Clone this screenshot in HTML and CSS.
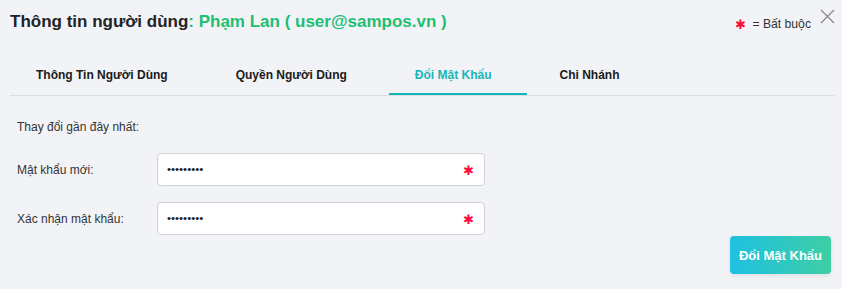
FILE: index.html
```html
<!DOCTYPE html>
<html lang="vi">
<head>
<meta charset="utf-8">
<title>Thông tin người dùng</title>
<link rel="stylesheet" href="styles.css">
</head>
<body>
<div class="modal">
  <div class="header">
    <h1 class="title">Thông tin người dùng<span class="user">: Phạm Lan ( user@sampos.vn )</span></h1>
    <div class="legend">
      <span class="req">&#x2731;</span>
      <span class="legend-text">= Bất buộc</span>
      <svg class="close" width="15" height="15" viewBox="0 0 15 15" aria-hidden="true">
        <path d="M1 1 L14 14 M14 1 L1 14" stroke="#8a8c92" stroke-width="1.4" fill="none"/>
      </svg>
    </div>
  </div>
  <div class="tabs">
    <div class="tab">Thông Tin Người Dùng</div>
    <div class="tab">Quyền Người Dùng</div>
    <div class="tab active">Đổi Mật Khẩu</div>
    <div class="tab">Chi Nhánh</div>
  </div>
  <div class="form">
    <div class="row info">
      <div class="label">Thay đổi gần đây nhất:</div>
    </div>
    <div class="row">
      <div class="label">Mật khẩu mới:</div>
      <div class="field"><span class="dots">•••••••••</span><span class="req field-req">&#x2731;</span></div>
    </div>
    <div class="row">
      <div class="label">Xác nhận mật khẩu:</div>
      <div class="field"><span class="dots">•••••••••</span><span class="req field-req">&#x2731;</span></div>
    </div>
    <div class="actions">
      <button class="btn">Đổi Mật Khẩu</button>
    </div>
  </div>
</div>
</body>
</html>
```

FILE: styles.css
```css
html, body {
  margin: 0;
  padding: 0;
  background: #f2f3f7;
}
body {
  font-family: "Liberation Sans", Arial, sans-serif;
  color: #333;
  width: 842px;
  height: 289px;
  overflow: hidden;
}
.modal {
  padding: 0 7px 0 10px;
}
.header {
  display: flex;
  justify-content: space-between;
  align-items: flex-start;
  padding-top: 12px;
  height: 46px;
}
.title {
  margin: 0;
  font-size: 17px;
  line-height: 20px;
  font-weight: bold;
  color: #222326;
}
.user {
  color: #1dbf73;
}
.legend {
  display: flex;
  align-items: flex-start;
  margin-top: -3px;
}
.req {
  color: #ff0a3c;
  font-size: 13px;
}
.legend .req {
  margin-top: 8px;
  margin-right: 6px;
}
.legend-text {
  font-size: 12.2px;
  color: #333;
  margin-top: 8px;
}
.close {
  margin-left: 9px;
  margin-top: 0;
}
.tabs {
  display: flex;
  border-bottom: 1px solid #dcdee5;
  height: 37px;
}
.tab {
  padding: 0 35px 0 26px;
  margin-right: 7px;
  font-size: 12px;
  font-weight: bold;
  color: #1a1a1a;
  line-height: 35px;
  height: 35px;
  border-bottom: 2px solid transparent;
}
.tab.active {
  color: #1ab5b8;
  border-bottom-color: #12b6ba;
}
.form {
  padding: 14px 4px 0 7px;
}
.row {
  display: flex;
  align-items: center;
  margin-bottom: 16px;
}
.row.info {
  height: 33px;
  margin-bottom: 10px;
  margin-top: 0;
}
.label {
  width: 140px;
  font-size: 12px;
  color: #333;
}
.field {
  box-sizing: border-box;
  width: 328px;
  height: 33px;
  background: #fff;
  border: 1px solid #cfd2d9;
  border-radius: 4px;
  display: flex;
  align-items: center;
  justify-content: space-between;
  padding: 0 10px 0 9px;
}
.dots {
  font-size: 11.5px;
  color: #222;
  margin-top: -2px;
}
.field-req {
  font-size: 13px;
  margin-top: 2px;
}
.actions {
  display: flex;
  justify-content: flex-end;
  margin-top: -15px;
}
.btn {
  width: 101px;
  height: 38px;
  border: 0;
  border-radius: 4px;
  background: linear-gradient(90deg, #1fc0e2, #3dcfa4);
  color: #fff;
  font-family: "Liberation Sans", Arial, sans-serif;
  font-weight: bold;
  font-size: 13px;
  padding: 0;
  box-shadow: 0 2px 4px rgba(0, 0, 0, 0.08);
}
```
